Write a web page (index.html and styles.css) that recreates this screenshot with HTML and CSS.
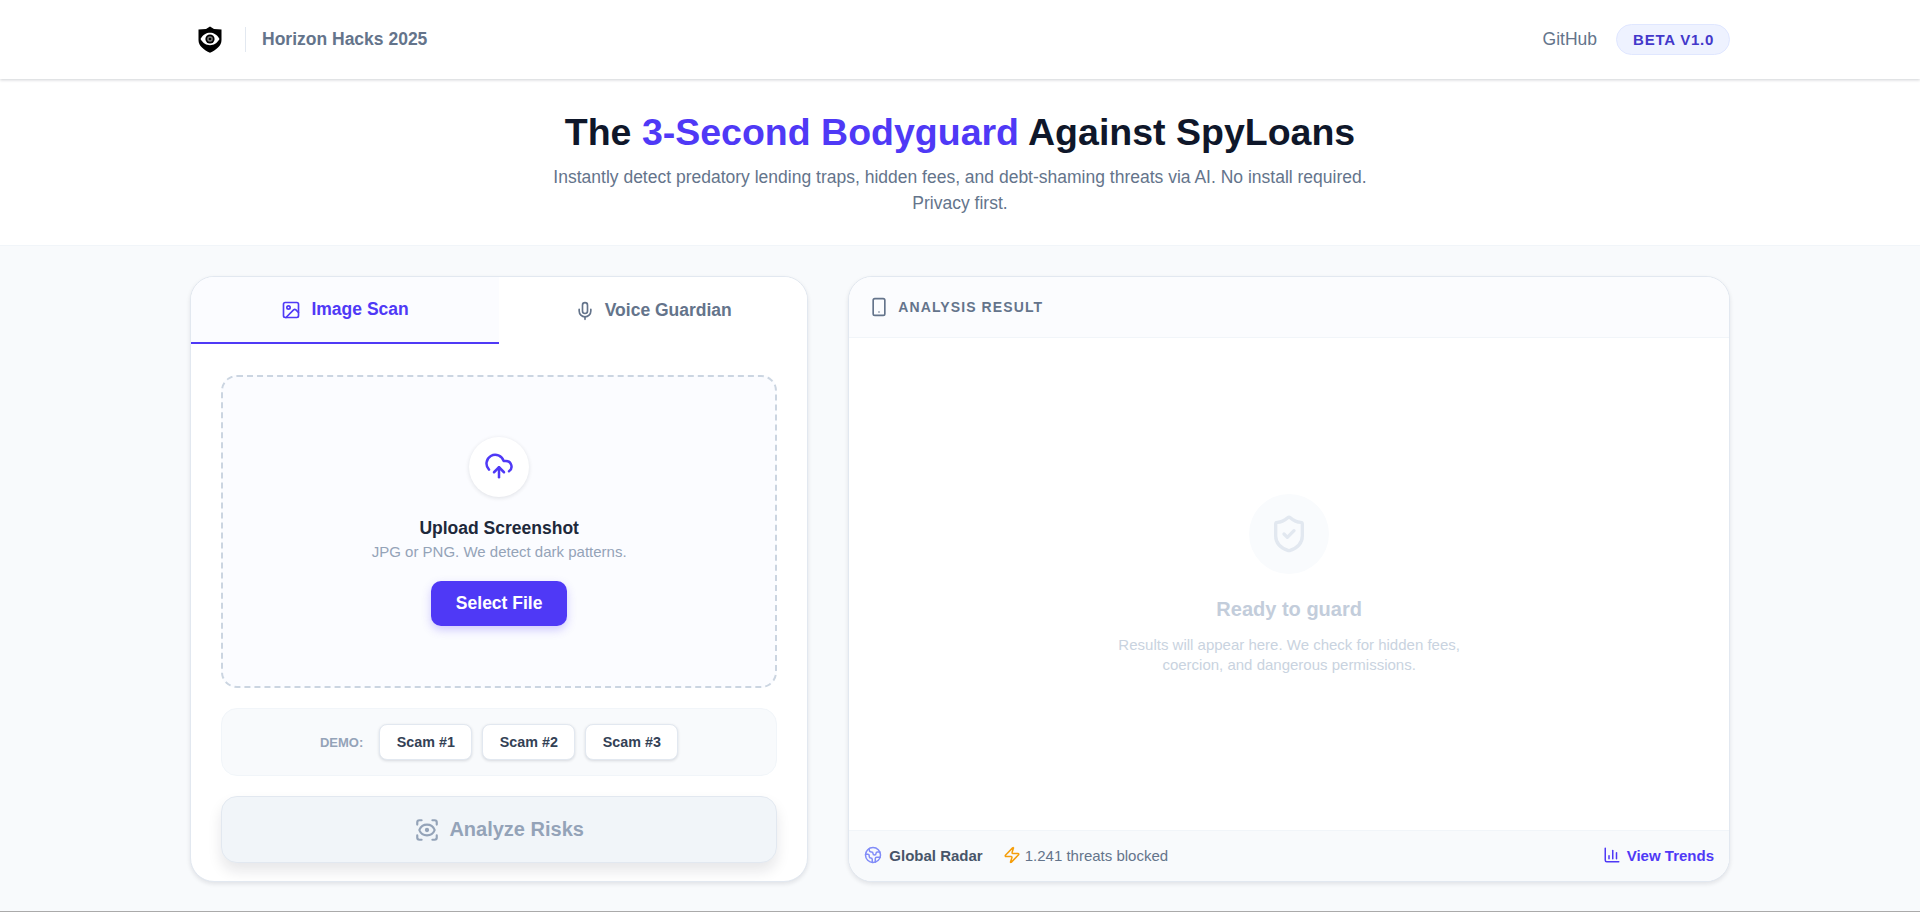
FILE: index.html
```html
<!DOCTYPE html>
<html lang="en">
<head>
    <meta charset="UTF-8" />
    <meta name="viewport" content="width=device-width, initial-scale=1.0"/>
    <title>The 3-Second Bodyguard Against SpyLoans</title>
    <link rel="stylesheet" href="styles.css">
</head>
<body>
    <header class="topbar">
        <div class="topbar-inner">
            <div class="brand">
                <svg class="logo" viewBox="0 0 24 27">
                    <path d="M12 0.5 L16 3 L23.5 3.5 V14 C23.5 20 18 24 12 26.8 C6 24 0.5 20 0.5 14 V3.5 L8 3 Z" fill="#000"/>
                    <path d="M2.5 13 C5 8.5 8.5 6.8 12 6.8 C15.5 6.8 19 8.5 21.5 13 C19 17.5 15.5 19.2 12 19.2 C8.5 19.2 5 17.5 2.5 13 Z" fill="#fff"/>
                    <circle cx="12" cy="13" r="4.6" fill="#000"/>
                    <circle cx="12" cy="13" r="2.8" fill="#777"/>
                    <circle cx="12" cy="13" r="1.3" fill="#000"/>
                </svg>
                <span class="brand-divider"></span>
                <span class="brand-name">Horizon Hacks 2025</span>
            </div>
            <div class="topbar-right">
                <a class="github" href="#">GitHub</a>
                <span class="badge">BETA V1.0</span>
            </div>
        </div>
    </header>

    <section class="hero">
        <h1>The <span class="accent">3-Second Bodyguard</span> Against SpyLoans</h1>
        <p>Instantly detect predatory lending traps, hidden fees, and debt-shaming threats via AI. No install required. Privacy first.</p>
    </section>

    <main class="main">
        <div class="grid">
            <section class="card scan-card">
                <div class="tabs">
                    <button class="tab active">
                        <svg class="icon" viewBox="0 0 24 24"><rect x="3" y="3" width="18" height="18" rx="2"/><circle cx="9" cy="9" r="2"/><path d="m21 15-3.086-3.086a2 2 0 0 0-2.828 0L6 21"/></svg>
                        Image Scan
                    </button>
                    <button class="tab">
                        <svg class="icon" viewBox="0 0 24 24"><path d="M12 19v3"/><path d="M19 10v2a7 7 0 0 1-14 0v-2"/><rect x="9" y="2" width="6" height="13" rx="3"/></svg>
                        Voice Guardian
                    </button>
                </div>
                <div class="scan-body">
                    <div class="dropzone">
                        <div class="upload-circle">
                            <svg class="upload-icon" viewBox="0 0 24 24"><path d="M12 13v8"/><path d="M4 14.899A7 7 0 1 1 15.71 8h1.79a4.5 4.5 0 0 1 2.5 8.242"/><path d="m8 17 4-4 4 4"/></svg>
                        </div>
                        <h3>Upload Screenshot</h3>
                        <p>JPG or PNG. We detect dark patterns.</p>
                        <button class="select-btn">Select File</button>
                    </div>
                    <div class="demo">
                        <span class="demo-label">DEMO:</span>
                        <button class="demo-btn">Scam #1</button>
                        <button class="demo-btn">Scam #2</button>
                        <button class="demo-btn">Scam #3</button>
                    </div>
                    <button class="analyze-btn">
                        <svg class="analyze-icon" viewBox="0 0 24 24"><path d="M3 7V5a2 2 0 0 1 2-2h2"/><path d="M17 3h2a2 2 0 0 1 2 2v2"/><path d="M21 17v2a2 2 0 0 1-2 2h-2"/><path d="M7 21H5a2 2 0 0 1-2-2v-2"/><circle cx="12" cy="12" r="1"/><path d="M18.944 12.33a1 1 0 0 0 0-.66 7.5 7.5 0 0 0-13.888 0 1 1 0 0 0 0 .66 7.5 7.5 0 0 0 13.888 0"/></svg>
                        Analyze Risks
                    </button>
                </div>
            </section>

            <section class="card result-card">
                <div class="result-head">
                    <svg class="icon" viewBox="0 0 24 24"><rect x="5" y="2" width="14" height="20" rx="2"/><path d="M12 18h.01"/></svg>
                    <span>ANALYSIS RESULT</span>
                </div>
                <div class="result-empty">
                    <div class="shield-circle">
                        <svg class="shield-icon" viewBox="0 0 24 24"><path d="M20 13c0 5-3.5 7.5-7.66 8.95a1 1 0 0 1-.67-.01C7.5 20.5 4 18 4 13V6a1 1 0 0 1 1-1c2 0 4.5-1.2 6.24-2.72a1.17 1.17 0 0 1 1.52 0C14.51 3.81 17 5 19 5a1 1 0 0 1 1 1z"/><path d="m9 12 2 2 4-4"/></svg>
                    </div>
                    <h3>Ready to guard</h3>
                    <p>Results will appear here. We check for hidden fees, coercion, and dangerous permissions.</p>
                </div>
                <div class="result-foot">
                    <div class="radar">
                        <svg class="foot-icon globe" viewBox="0 0 24 24"><path d="M21.54 15H17a2 2 0 0 0-2 2v4.54"/><path d="M7 3.34V5a3 3 0 0 0 3 3a2 2 0 0 1 2 2c0 1.1.9 2 2 2a2 2 0 0 0 2-2c0-1.1.9-2 2-2h3.17"/><path d="M11 21.95V18a2 2 0 0 0-2-2a2 2 0 0 1-2-2v-1a2 2 0 0 0-2-2H2.05"/><circle cx="12" cy="12" r="10"/></svg>
                        <strong>Global Radar</strong>
                        <svg class="foot-icon zap" viewBox="0 0 24 24"><path d="M4 14a1 1 0 0 1-.78-1.63l9.9-10.2a.5.5 0 0 1 .86.46l-1.92 6.02A1 1 0 0 0 13 10h7a1 1 0 0 1 .78 1.63l-9.9 10.2a.5.5 0 0 1-.86-.46l1.92-6.02A1 1 0 0 0 11 14z"/></svg>
                        <span>1.241 threats blocked</span>
                    </div>
                    <a class="trends" href="#">
                        <svg class="foot-icon" viewBox="0 0 24 24"><path d="M3 3v16a2 2 0 0 0 2 2h16"/><path d="M8 17v-4"/><path d="M13 17V6"/><path d="M18 17V9"/></svg>
                        View Trends
                    </a>
                </div>
            </section>
        </div>
    </main>
</body>
</html>
```

FILE: styles.css
```css
* {
    box-sizing: border-box;
}

body {
    margin: 0;
    height: 912px;
    overflow: hidden;
    display: flex;
    flex-direction: column;
    font-family: 'Liberation Sans', Arial, sans-serif;
    background: #f8fafc;
    color: #0f172a;
    border-bottom: 1px solid #aaa;
}

button {
    font-family: inherit;
    cursor: pointer;
}

svg {
    fill: none;
    stroke: currentColor;
    stroke-width: 2;
    stroke-linecap: round;
    stroke-linejoin: round;
    flex-shrink: 0;
}

/* TOP BAR */
.topbar {
    height: 79px;
    background: #fff;
    box-shadow: 0 1px 3px rgba(15, 23, 42, 0.2);
    position: relative;
    z-index: 2;
}

.topbar-inner {
    width: 1540px;
    height: 100%;
    margin: 0 auto;
    display: flex;
    align-items: center;
    justify-content: space-between;
}

.brand {
    display: flex;
    align-items: center;
    padding-left: 8px;
}

.logo {
    width: 24px;
    height: 27px;
    stroke: none;
}

.brand-divider {
    width: 1px;
    height: 25px;
    background: #e2e8f0;
    margin: 0 16px 0 23px;
}

.brand-name {
    font-size: 17.5px;
    font-weight: 700;
    color: #64748b;
}

.topbar-right {
    display: flex;
    align-items: center;
    gap: 19px;
}

.github {
    font-size: 17.5px;
    color: #64748b;
    text-decoration: none;
}

.badge {
    height: 31px;
    padding: 0 15px 0 16px;
    display: flex;
    align-items: center;
    border-radius: 16px;
    background: #eef2ff;
    border: 1px solid #e0e7ff;
    color: #4338ca;
    font-size: 15px;
    font-weight: 700;
    letter-spacing: 0.75px;
}

/* HERO */
.hero {
    height: 167px;
    background: #fff;
    border-bottom: 1px solid #f1f5f9;
    padding-top: 31px;
    text-align: center;
}

.hero h1 {
    margin: 0;
    font-size: 37.5px;
    line-height: 44px;
    font-weight: 700;
}

.accent {
    color: #4f39f6;
}

.hero p {
    width: 840px;
    margin: 10px auto 0;
    font-size: 17.5px;
    line-height: 26px;
    color: #64748b;
}

/* MAIN */
.main {
    flex: 1;
    padding-top: 30px;
}

.grid {
    width: 1540px;
    height: 606px;
    margin: 0 auto;
    display: grid;
    grid-template-columns: repeat(12, 1fr);
    gap: 40px;
}

.card {
    background: #fff;
    border: 1px solid #e2e8f0;
    border-radius: 24px;
    box-shadow: 0 2px 4px rgba(15, 23, 42, 0.1);
    overflow: hidden;
    display: flex;
    flex-direction: column;
}

.scan-card {
    grid-column: span 5;
}

.result-card {
    grid-column: span 7;
}

/* TABS */
.tabs {
    display: flex;
    height: 67px;
    border-bottom: 1px solid #f1f5f9;
}

.tab {
    flex: 1;
    display: flex;
    align-items: center;
    justify-content: center;
    gap: 10px;
    height: 67px;
    border: 0;
    background: #fff;
    font-size: 17.5px;
    font-weight: 700;
    color: #64748b;
}

.tab.active {
    background: #fbfcff;
    color: #4f39f6;
    border-bottom: 2px solid #4f39f6;
}

.icon {
    width: 20px;
    height: 20px;
}

/* UPLOAD */
.scan-body {
    flex: 1;
    padding: 31px 30px 0;
    display: flex;
    flex-direction: column;
}

.dropzone {
    height: 313px;
    background: #fbfcff;
    border: 2px dashed #cbd5e1;
    border-radius: 16px;
    display: flex;
    flex-direction: column;
    align-items: center;
    padding-top: 60px;
}

.upload-circle {
    width: 60px;
    height: 60px;
    border-radius: 50%;
    background: #fff;
    box-shadow: 0 1px 4px rgba(15, 23, 42, 0.12);
    display: flex;
    align-items: center;
    justify-content: center;
    color: #4f39f6;
    padding-bottom: 2px;
}

.upload-icon {
    width: 30px;
    height: 30px;
}

.dropzone h3 {
    margin: 17px 0 0;
    font-size: 17.5px;
    line-height: 28px;
    font-weight: 700;
    color: #1e293b;
}

.dropzone p {
    margin: 0;
    font-size: 15px;
    line-height: 20px;
    color: #94a3b8;
}

.select-btn {
    margin-top: 19px;
    width: 136px;
    height: 45px;
    border: 0;
    border-radius: 10px;
    background: #4f39f6;
    color: #fff;
    font-size: 17.5px;
    font-weight: 700;
    box-shadow: 0 4px 10px rgba(79, 57, 246, 0.25);
}

/* DEMO */
.demo {
    margin-top: 20px;
    height: 68px;
    border: 1px solid #f1f5f9;
    border-radius: 16px;
    background: #f8fafc;
    display: flex;
    align-items: center;
    justify-content: center;
    gap: 10px;
}

.demo-label {
    font-size: 13px;
    font-weight: 700;
    color: #94a3b8;
    margin-right: 6px;
}

.demo-btn {
    width: 93px;
    height: 36px;
    background: #fff;
    border: 1px solid #e2e8f0;
    border-radius: 8px;
    box-shadow: 0 1px 3px rgba(15, 23, 42, 0.14);
    font-size: 14.3px;
    font-weight: 700;
    color: #334155;
}

/* ANALYZE */
.analyze-btn {
    margin-top: 20px;
    height: 67px;
    display: flex;
    align-items: center;
    justify-content: center;
    gap: 9px;
    background: #f1f5f9;
    border: 1px solid #e2e8f0;
    border-radius: 16px;
    box-shadow: 0 8px 14px rgba(15, 23, 42, 0.1);
    font-size: 20px;
    font-weight: 700;
    color: #94a3b8;
}

.analyze-icon {
    width: 26px;
    height: 26px;
}

/* RESULT */
.result-head {
    height: 61px;
    display: flex;
    align-items: center;
    gap: 9px;
    padding-left: 20px;
    background: #fbfcfe;
    border-bottom: 1px solid #f1f5f9;
    color: #64748b;
    font-size: 14px;
    font-weight: 700;
    letter-spacing: 1.1px;
}

.result-empty {
    flex: 1;
    display: flex;
    flex-direction: column;
    align-items: center;
    justify-content: center;
    text-align: center;
}

.shield-circle {
    width: 80px;
    height: 80px;
    border-radius: 50%;
    background: #f9fbfd;
    display: flex;
    align-items: center;
    justify-content: center;
    color: #e2e8f0;
}

.shield-icon {
    width: 40px;
    height: 40px;
}

.result-empty h3 {
    margin: 21px 0 0;
    font-size: 20px;
    line-height: 28px;
    font-weight: 700;
    color: #c3cddb;
}

.result-empty p {
    width: 380px;
    margin: 12px 0 0;
    font-size: 15px;
    line-height: 20px;
    color: #c9d3e0;
}

.result-foot {
    height: 51px;
    padding: 0 15px 2px;
    display: flex;
    align-items: center;
    justify-content: space-between;
    background: #f8fafc;
    border-top: 1px solid #f1f5f9;
    font-size: 15px;
}

.radar {
    display: flex;
    align-items: center;
    color: #64748b;
}

.radar strong {
    color: #475569;
    margin: 0 20px 0 7px;
}

.foot-icon {
    width: 18px;
    height: 18px;
}

.globe {
    color: #818cf8;
}

.zap {
    color: #f59e0b;
    margin-right: 4px;
}

.trends {
    display: flex;
    align-items: center;
    gap: 6px;
    color: #4f39f6;
    font-weight: 700;
    text-decoration: none;
}
```
